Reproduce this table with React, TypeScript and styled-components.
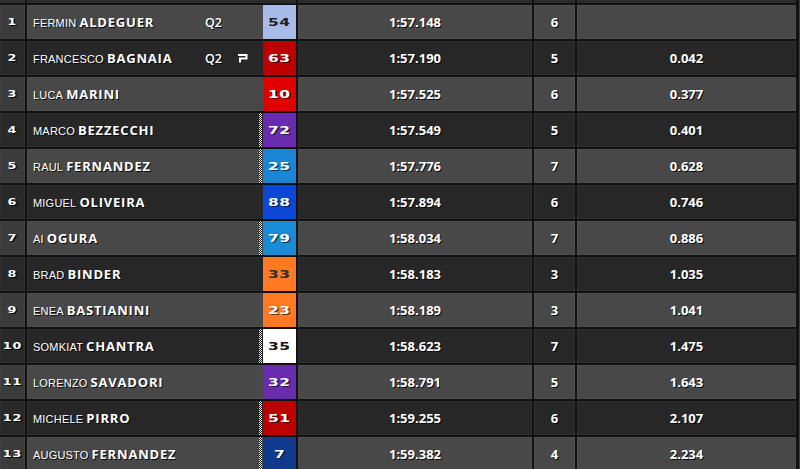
import { createGlobalStyle, styled } from "styled-components";

const GlobalStyle = createGlobalStyle`
    html, body {
        margin: 0;
        padding: 0;
        background: #121212;
        overflow: hidden;
    }
`

interface IRider {
    pos: number;
    first: string;
    last: string;
    num: string;
    bg: string;
    fg: string;
    flag?: boolean;
    time: string;
    laps: number;
    gap: string;
    q2?: boolean;
    tyre?: boolean;
}

const riders: IRider[] = [
    { pos: 1, first: "FERMIN", last: "ALDEGUER", num: "54", bg: "#a9bbe9", fg: "#1e1e1e", time: "1:57.148", laps: 6, gap: "", q2: true },
    { pos: 2, first: "FRANCESCO", last: "BAGNAIA", num: "63", bg: "#bd0000", fg: "#fff", time: "1:57.190", laps: 5, gap: "0.042", q2: true, tyre: true },
    { pos: 3, first: "LUCA", last: "MARINI", num: "10", bg: "#e10000", fg: "#fff", time: "1:57.525", laps: 6, gap: "0.377" },
    { pos: 4, first: "MARCO", last: "BEZZECCHI", num: "72", bg: "#6a2cae", fg: "#fff", flag: true, time: "1:57.549", laps: 5, gap: "0.401" },
    { pos: 5, first: "RAUL", last: "FERNANDEZ", num: "25", bg: "#1c86d6", fg: "#fff", flag: true, time: "1:57.776", laps: 7, gap: "0.628" },
    { pos: 6, first: "MIGUEL", last: "OLIVEIRA", num: "88", bg: "#0b48d6", fg: "#fff", time: "1:57.894", laps: 6, gap: "0.746" },
    { pos: 7, first: "AI", last: "OGURA", num: "79", bg: "#1a8bd8", fg: "#fff", flag: true, time: "1:58.034", laps: 7, gap: "0.886" },
    { pos: 8, first: "BRAD", last: "BINDER", num: "33", bg: "#ff7a22", fg: "#2a2a2a", time: "1:58.183", laps: 3, gap: "1.035" },
    { pos: 9, first: "ENEA", last: "BASTIANINI", num: "23", bg: "#ff7a22", fg: "#fff", time: "1:58.189", laps: 3, gap: "1.041" },
    { pos: 10, first: "SOMKIAT", last: "CHANTRA", num: "35", bg: "#ffffff", fg: "#111", flag: true, time: "1:58.623", laps: 7, gap: "1.475" },
    { pos: 11, first: "LORENZO", last: "SAVADORI", num: "32", bg: "#6a2cae", fg: "#fff", time: "1:58.791", laps: 5, gap: "1.643" },
    { pos: 12, first: "MICHELE", last: "PIRRO", num: "51", bg: "#bd0000", fg: "#fff", flag: true, time: "1:59.255", laps: 6, gap: "2.107" },
    { pos: 13, first: "AUGUSTO", last: "FERNANDEZ", num: "7", bg: "#123a8c", fg: "#fff", flag: true, time: "1:59.382", laps: 4, gap: "2.234" },
]

const Board = styled.div`
    width: 799px;
    height: 469px;
    border-right: 1px solid #d00000;
    background: #121212;
    display: flex;
    flex-direction: column;
    gap: 2px;
    overflow: hidden;
`

const Row = styled.div<{ $h?: number }>`
    display: grid;
    grid-template-columns: 25px 269px 234px 41px 219px;
    column-gap: 2px;
    height: ${({ $h }) => $h || 34}px;
    flex: none;
    font-family: "Open Sans", "Liberation Sans", sans-serif;
    color: #fff;
    text-shadow: 1px 1px 0 rgba(0, 0, 0, 0.85);
`

const Cell = styled.div<{ $light: boolean; $dim?: boolean }>`
    display: flex;
    align-items: center;
    justify-content: center;
    background: ${({ $light, $dim }) =>
        $dim ? ($light ? "#3b3b3b" : "#292929") : $light ? "#484848" : "#272727"};
    box-shadow: inset 0 0 0 1px rgba(255, 255, 255, 0.04);
    font-size: 13px;
    font-weight: 700;
`

const PosNum = styled.span`
    display: inline-block;
    font-family: "DejaVu Sans", sans-serif;
    font-size: 8.5px;
    font-weight: 700;
    transform: scaleX(1.5);
    letter-spacing: 0.5px;
`

const NameCell = styled(Cell)`
    justify-content: flex-start;
    padding-left: 6px;
`

const Name = styled.div`
    flex: 1;
    display: flex;
    align-items: baseline;
    gap: 3px;
    white-space: nowrap;
`

const First = styled.span`
    font-family: "Liberation Sans", sans-serif;
    font-size: 11px;
    font-weight: 400;
    letter-spacing: 0.2px;
`

const Last = styled.span`
    font-size: 13px;
    font-weight: 700;
    letter-spacing: 0.8px;
`

const Q2 = styled.span`
    width: 32px;
    font-size: 12.5px;
    font-weight: 600;
`

const TyreSlot = styled.span`
    width: 22px;
    display: flex;
    align-items: center;
`

const Flag = styled.div<{ $on?: boolean }>`
    width: 3px;
    height: 100%;
    margin-right: 1px;
    background: ${({ $on }) =>
        $on ? "repeating-conic-gradient(#e8e8e8 0 25%, #1a1a1a 0 50%) 0 0 / 2px 2px" : "transparent"};
`

const NumBox = styled.div<{ $bg: string; $fg: string }>`
    width: 33px;
    height: 100%;
    display: flex;
    align-items: center;
    justify-content: center;
    background: ${({ $bg }) => $bg};
    color: ${({ $fg }) => $fg};
    text-shadow: ${({ $fg }) => ($fg === "#fff" ? "1px 1px 0 rgba(0,0,0,0.6)" : "none")};
`

const BikeNum = styled.span`
    display: inline-block;
    font-family: "DejaVu Sans", sans-serif;
    font-size: 10px;
    font-weight: 700;
    transform: scaleX(1.55);
    letter-spacing: 0.3px;
`

const TyreIcon = () => (
    <svg width="11" height="10" viewBox="0 0 11 10">
        <path d="M1 2 H9.5 V5.5 H3 V9.5" fill="none" stroke="#fff" strokeWidth="2" />
    </svg>
)

const RiderRow = ({ r }: { r: IRider }) => {
    const light = r.pos % 2 === 1
    return (
        <Row>
            <Cell $light={light} $dim>
                <PosNum>{r.pos}</PosNum>
            </Cell>
            <NameCell $light={light}>
                <Name>
                    <First>{r.first}</First>
                    <Last>{r.last}</Last>
                </Name>
                <Q2>{r.q2 ? "Q2" : ""}</Q2>
                <TyreSlot>{r.tyre && <TyreIcon />}</TyreSlot>
                <Flag $on={r.flag} />
                <NumBox $bg={r.bg} $fg={r.fg}>
                    <BikeNum>{r.num}</BikeNum>
                </NumBox>
            </NameCell>
            <Cell $light={light}>{r.time}</Cell>
            <Cell $light={light}>{r.laps}</Cell>
            <Cell $light={light}>{r.gap}</Cell>
        </Row>
    )
}

export default function App() {
    return (
        <>
            <GlobalStyle />
            <Board>
                <Row $h={3}>
                    <Cell $light={false} $dim />
                    <Cell $light={false} />
                    <Cell $light={false} />
                    <Cell $light={false} />
                    <Cell $light={false} />
                </Row>
                {riders.map((r) => (
                    <RiderRow key={r.pos} r={r} />
                ))}
            </Board>
        </>
    )
}
